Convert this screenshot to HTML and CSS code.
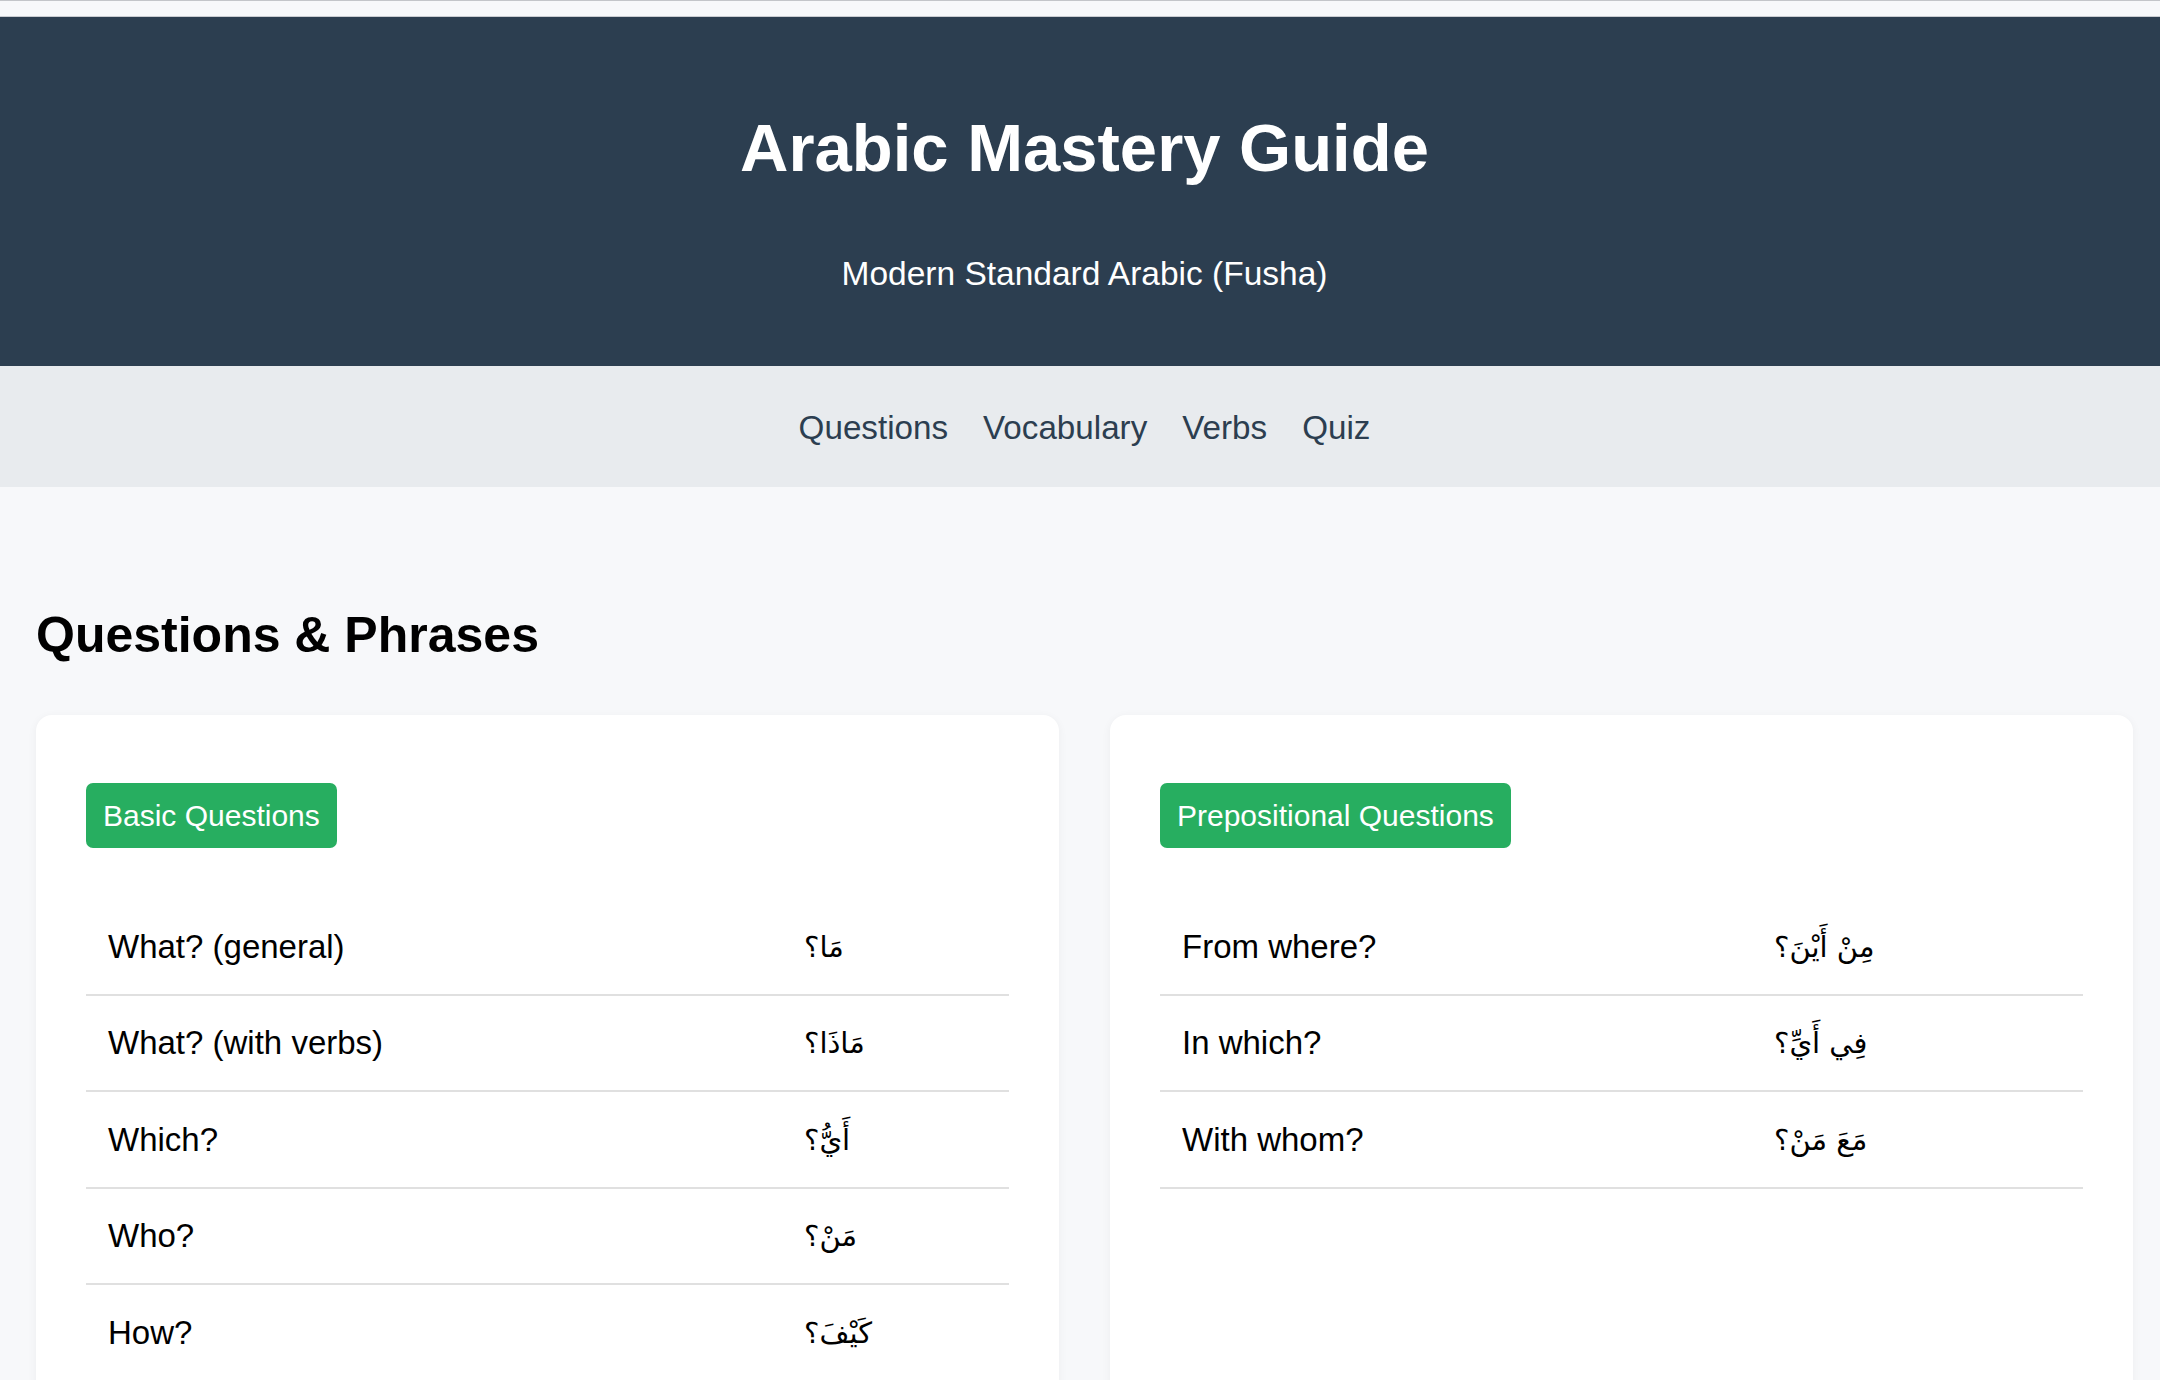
FILE: index.html
```html
<!DOCTYPE html>
<html lang="en">
<head>
<meta charset="utf-8">
<title>Arabic Mastery Guide</title>
<link rel="stylesheet" href="styles.css">
</head>
<body>
<div class="top-strip"></div>
<header class="hero">
  <h1 class="hero-title">Arabic Mastery Guide</h1>
  <p class="hero-subtitle">Modern Standard Arabic (Fusha)</p>
</header>
<nav class="main-nav">
  <a href="#questions" class="nav-link">Questions</a>
  <a href="#vocabulary" class="nav-link">Vocabulary</a>
  <a href="#verbs" class="nav-link">Verbs</a>
  <a href="#quiz" class="nav-link">Quiz</a>
</nav>
<main class="content">
  <section id="questions" class="section">
    <h2 class="section-title">Questions &amp; Phrases</h2>
    <div class="card-grid">
      <article class="card">
        <h3 class="badge">Basic Questions</h3>
        <div class="phrase-list phrase-list--basic">
          <div class="phrase-row"><span class="en">What? (general)</span><span class="ar" lang="ar">مَا؟</span></div>
          <div class="phrase-row"><span class="en">What? (with verbs)</span><span class="ar" lang="ar">مَاذَا؟</span></div>
          <div class="phrase-row"><span class="en">Which?</span><span class="ar" lang="ar">أَيُّ؟</span></div>
          <div class="phrase-row"><span class="en">Who?</span><span class="ar" lang="ar">مَنْ؟</span></div>
          <div class="phrase-row"><span class="en">How?</span><span class="ar" lang="ar">كَيْفَ؟</span></div>
        </div>
      </article>
      <article class="card">
        <h3 class="badge">Prepositional Questions</h3>
        <div class="phrase-list phrase-list--prep">
          <div class="phrase-row"><span class="en">From where?</span><span class="ar" lang="ar">مِنْ أَيْنَ؟</span></div>
          <div class="phrase-row"><span class="en">In which?</span><span class="ar" lang="ar">فِي أَيِّ؟</span></div>
          <div class="phrase-row"><span class="en">With whom?</span><span class="ar" lang="ar">مَعَ مَنْ؟</span></div>
        </div>
      </article>
    </div>
  </section>
</main>
</body>
</html>
```
FILE: styles.css
```css
* {
  box-sizing: border-box;
}

html, body {
  margin: 0;
  padding: 0;
}

body {
  background: #f7f8fa;
  font-family: "Liberation Sans", Arial, Helvetica, sans-serif;
  font-size: 33px;
  line-height: 38px;
  color: #000;
}

.top-strip {
  height: 17px;
  background: #f7f8fa;
  border-top: 1px solid #c3c5c9;
  border-bottom: 1px solid #c9ccd1;
}

.hero {
  background: #2c3e50;
  color: #fff;
  text-align: center;
  padding: 92px 0 73px 9px;
}

.hero-title {
  margin: 0;
  font-size: 67px;
  line-height: 78px;
  font-weight: 700;
}

.hero-subtitle {
  margin: 68px 0 0;
  font-size: 33.5px;
  line-height: 38px;
}

.main-nav {
  background: #e8ebee;
  height: 121px;
  display: flex;
  justify-content: center;
  align-items: center;
  gap: 35px;
  padding: 2px 0 0 9px;
}

.nav-link {
  color: #2c3e50;
  text-decoration: none;
  font-size: 33.2px;
  line-height: 38px;
}

.content {
  padding: 0 27px 0 36px;
}

.section-title {
  margin: 119px 0 51px;
  font-size: 50px;
  line-height: 58px;
  font-weight: 700;
}

.card-grid {
  display: grid;
  grid-template-columns: 1fr 1fr;
  gap: 51px;
}

.card {
  background: #fff;
  border-radius: 16px;
  box-shadow: 0 2px 10px rgba(0, 0, 0, 0.05);
  padding: 68px 50px 50px;
}

.badge {
  display: inline-block;
  margin: 0;
  background: #27ae60;
  color: #fff;
  font-weight: 400;
  font-size: 30px;
  line-height: 34px;
  padding: 16px 17px 15px;
  border-radius: 7px;
}

.phrase-list {
  margin-top: 51px;
  --en-col: 696px;
}

.phrase-list--prep {
  --en-col: 592px;
}

.phrase-row {
  display: grid;
  grid-template-columns: var(--en-col) 1fr;
  padding: 28.5px 22px 28px;
  border-bottom: 2px solid #e0e0e0;
  align-items: center;
}

.en {
  font-size: 33px;
  line-height: 38px;
}

.ar {
  font-family: "DejaVu Sans", sans-serif;
  font-size: 29px;
  line-height: 38px;
  text-align: left;
}
```
